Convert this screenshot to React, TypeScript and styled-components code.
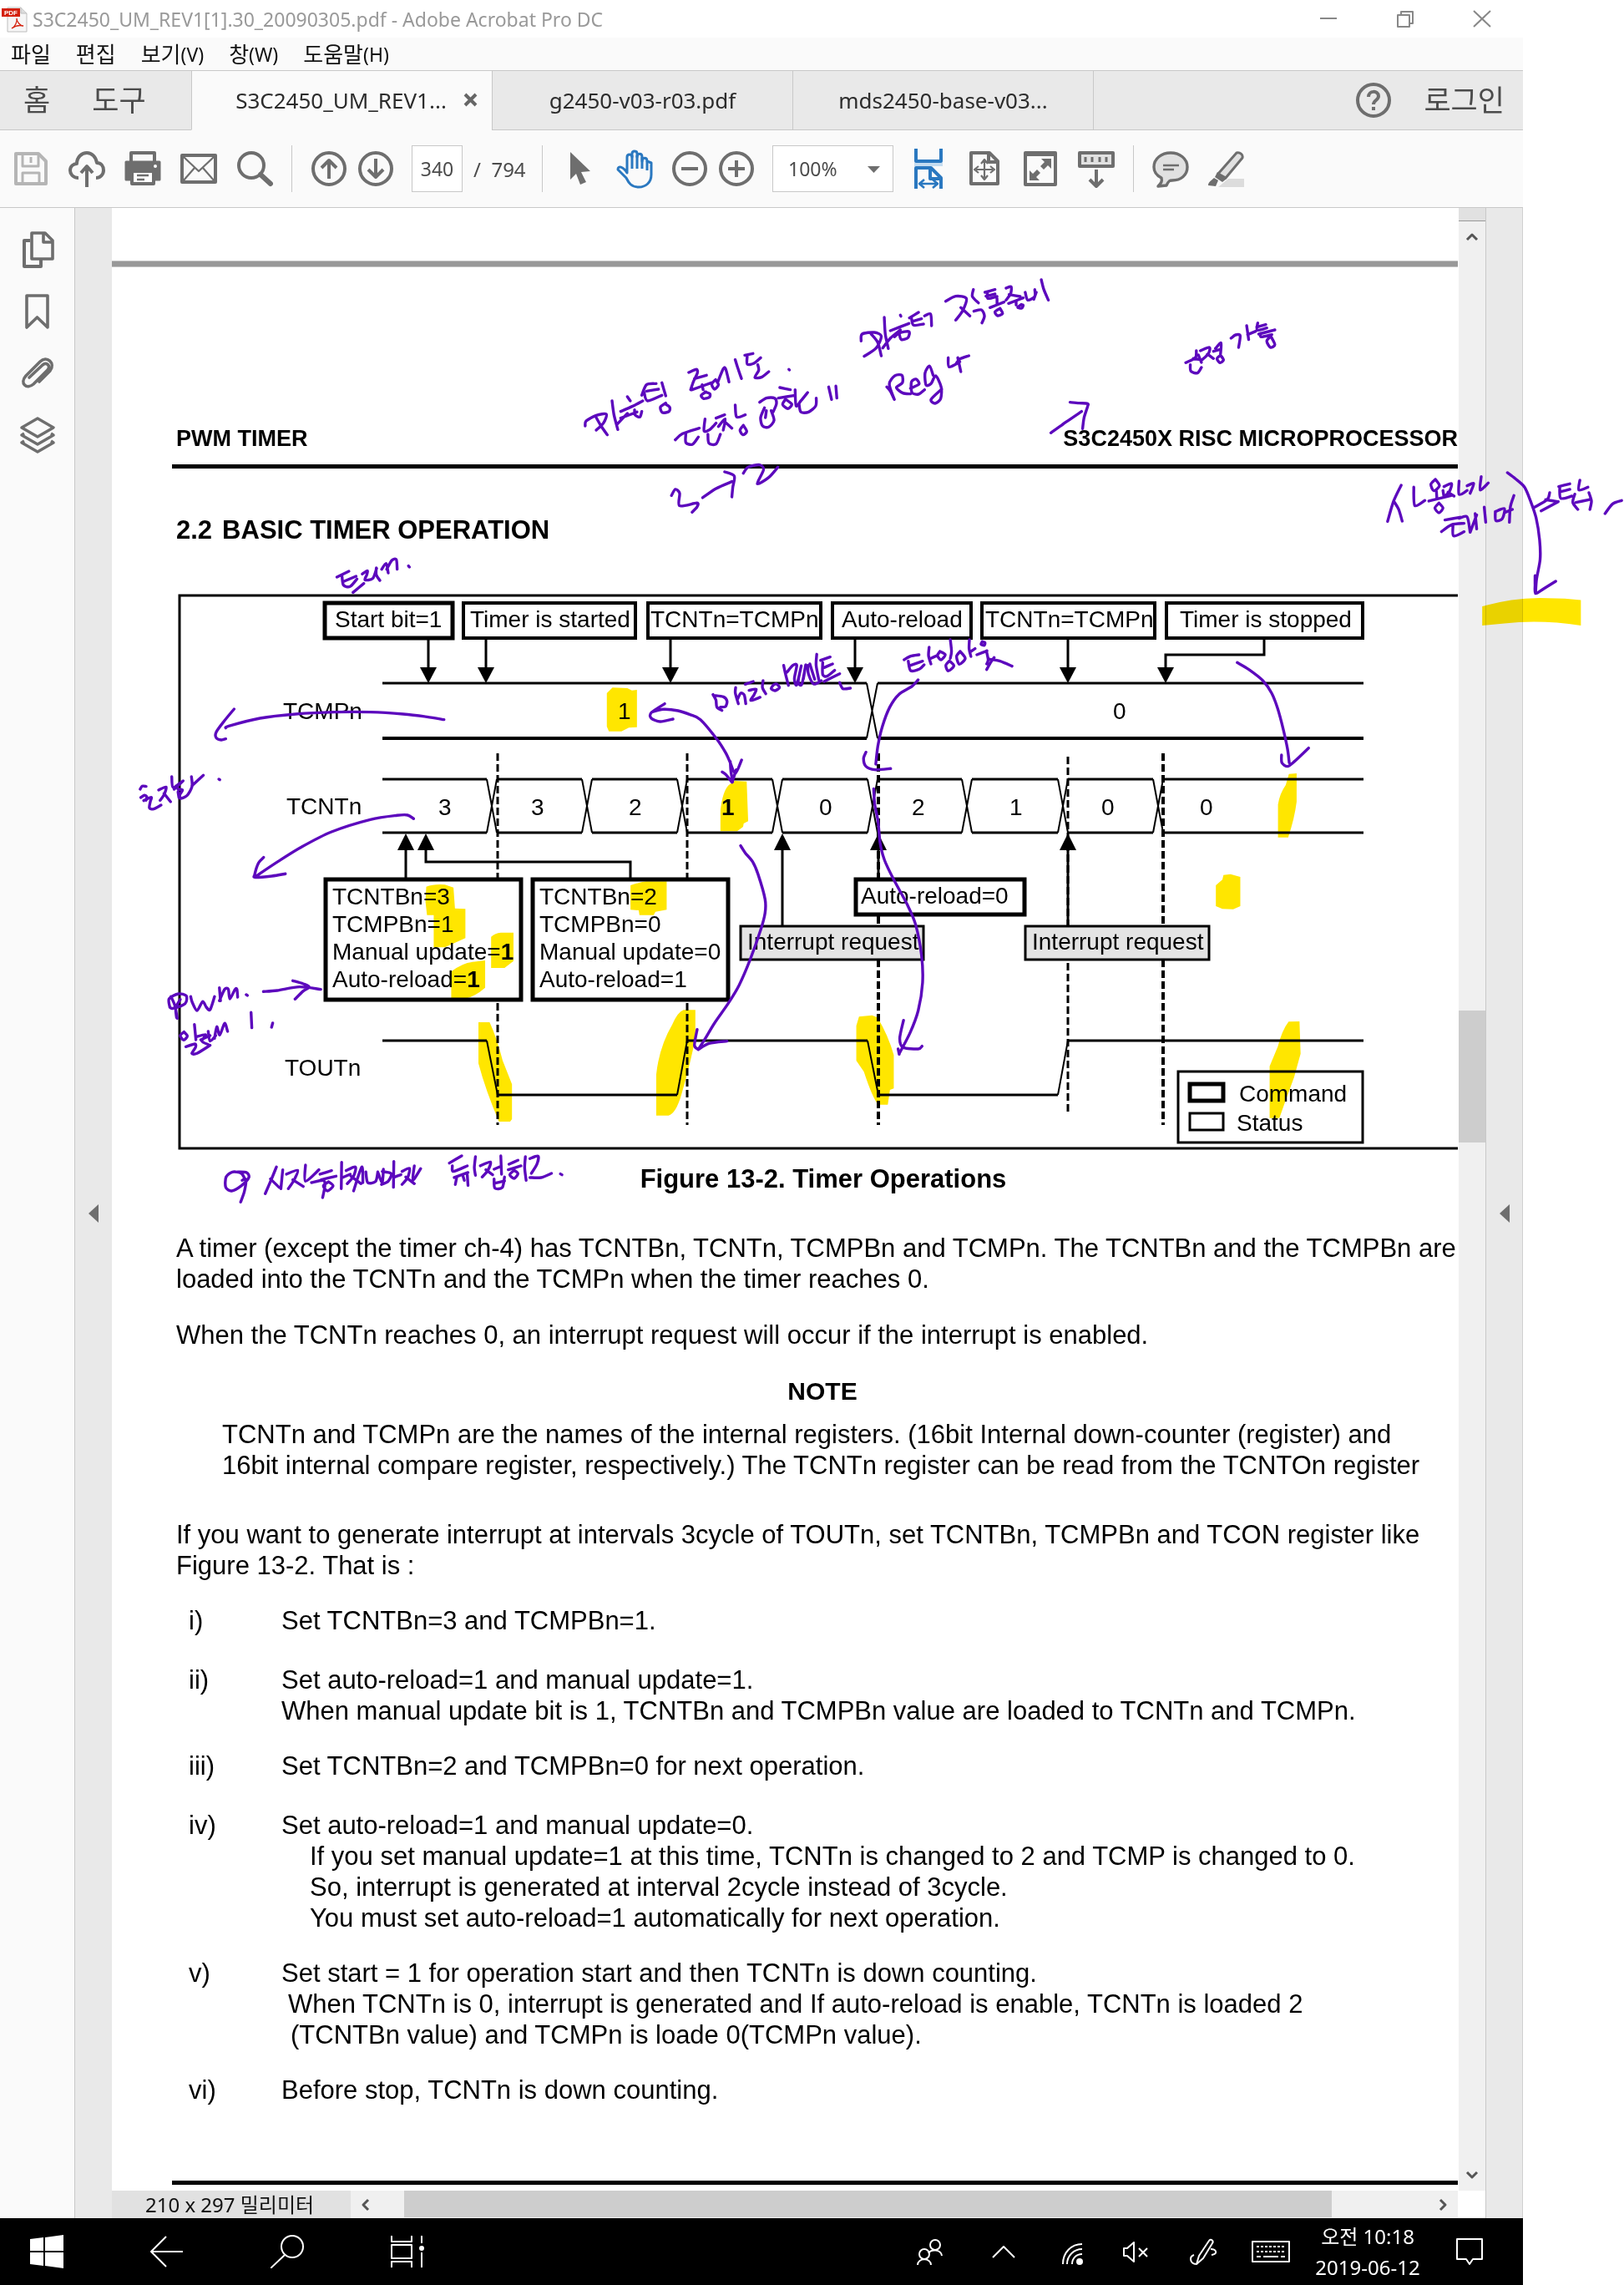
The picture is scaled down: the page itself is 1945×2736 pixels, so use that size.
import React from "react";
import styled, { createGlobalStyle } from "styled-components";

const GlobalStyle = createGlobalStyle`
  *, *::before, *::after { box-sizing: border-box; }
  html, body { margin: 0; padding: 0; background: #ffffff; }
  button, input, select { font: inherit; color: inherit; }
  p, h1, h2, h3, ol { margin: 0; padding: 0; }
`;

const UI_FONT = `"Noto Sans", "Noto Sans CJK KR", sans-serif`;
const DOC_FONT = `"Liberation Sans", Arial, sans-serif`;
const INK = "#5c08bd";
const GRAY = "#6e6e6e";
const BLUE = "#2a78c0";

/* ---------- shell ---------- */

const Screen = styled.div`
  position: relative;
  isolation: isolate;
  background: #ffffff;
  font-family: ${UI_FONT};
  overflow: hidden;
`;

const Desktop = styled.div`
  display: flex;
  flex-direction: column;
  margin-right: 121px;
`;

const PlainButton = styled.button`
  display: flex;
  align-items: center;
  justify-content: center;
  padding: 0;
  border: 0;
  background: transparent;
  flex: none;
`;

const TitleBar = styled.header`
  display: flex;
  align-items: center;
  height: 45px;
  padding: 0 3px 0 2px;
  background: #ffffff;
  color: #999999;
`;

const WindowTitle = styled.h1`
  flex: 1;
  padding-left: 6px;
  font-size: 23px;
  line-height: 30px;
  font-weight: 400;
  white-space: nowrap;
`;

const WindowButton = styled(PlainButton)`
  width: 92px;
  height: 45px;
`;

const MenuBar = styled.nav`
  display: flex;
  align-items: center;
  gap: 30px;
  height: 39px;
  padding-left: 13px;
  background: #fafafa;
  color: #111111;
`;

const MenuItem = styled(PlainButton)`
  font-size: 26px;
  line-height: 36px;
  white-space: nowrap;

  small {
    font-size: 23px;
  }
`;

const TabStrip = styled.div`
  display: flex;
  height: 72px;
  border-top: 1px solid #c8c8c8;
  background: #e9e9e9;
  color: #4b4b4b;
`;

const HomeTabs = styled.div`
  display: flex;
  align-items: center;
  gap: 50px;
  width: 229px;
  padding-left: 28px;
  border-bottom: 1px solid #c8c8c8;
`;

const BigTextButton = styled(PlainButton)`
  font-size: 35px;
  line-height: 44px;
  white-space: nowrap;
`;

const DocTab = styled.div<{ $active?: boolean }>`
  display: flex;
  align-items: center;
  justify-content: center;
  gap: 20px;
  width: 360px;
  border-left: 1px solid #c8c8c8;
  border-bottom: 1px solid ${(p) => (p.$active ? "#fafafa" : "#c8c8c8")};
  background: ${(p) => (p.$active ? "#fafafa" : "#e9e9e9")};
  color: #2c2c2c;
  padding-left: ${(p) => (p.$active ? "36px" : "0")};
`;

const TabName = styled(PlainButton)`
  font-size: 26px;
  line-height: 36px;
  white-space: nowrap;
`;

const TabRest = styled.div`
  display: flex;
  align-items: center;
  justify-content: flex-end;
  gap: 38px;
  flex: 1;
  padding-right: 22px;
  border-left: 1px solid #c8c8c8;
  border-bottom: 1px solid #c8c8c8;
`;

const Toolbar = styled.div`
  display: flex;
  align-items: center;
  height: 93px;
  padding: 0 15px;
  border-bottom: 1px solid #c8c8c8;
  background: #fafafa;
  color: ${GRAY};
`;

const ToolGroup = styled.div<{ $gap: number }>`
  display: flex;
  align-items: center;
  gap: ${(p) => p.$gap}px;
`;

const ToolButton = styled(PlainButton)`
  width: 44px;
  height: 48px;
`;

const Divider = styled.div`
  width: 1px;
  height: 56px;
  margin: 0 22px;
  background: #c8c8c8;
`;

const PageField = styled.label`
  display: flex;
  align-items: center;
  gap: 13px;
  width: 134px;
  margin-left: 21px;
  font-size: 24px;
  color: #4b4b4b;
  white-space: nowrap;

  input {
    width: 61px;
    height: 56px;
    padding: 0;
    border: 1px solid #c8c8c8;
    background: #ffffff;
    text-align: center;
    font-size: 23px;
  }
`;

const ZoomField = styled.label`
  position: relative;
  display: flex;
  margin: 0 20px 0 21px;

  select {
    appearance: none;
    width: 145px;
    height: 56px;
    padding: 0 0 0 18px;
    border: 1px solid #c8c8c8;
    border-radius: 0;
    background: #ffffff;
    color: #4b4b4b;
    font-size: 23px;
  }

  svg {
    position: absolute;
    right: 16px;
    top: 25px;
    pointer-events: none;
  }
`;

/* ---------- work area ---------- */

const WorkArea = styled.div`
  display: flex;
  background: #e9e9e9;
`;

const SideRail = styled.nav`
  display: flex;
  flex-direction: column;
  align-items: center;
  gap: 30px;
  width: 90px;
  padding-top: 28px;
  border-right: 1px solid #c8c8c8;
  background: #fafafa;
`;

const RailButton = styled(PlainButton)`
  width: 44px;
  height: 44px;
`;

const Gutter = styled.div<{ $lined?: boolean }>`
  display: flex;
  align-items: center;
  justify-content: center;
  width: 44px;
  background: #e9e9e9;
  border-right: ${(p) => (p.$lined ? "1px solid #d0d0d0" : "0")};
`;

const Viewer = styled.main`
  display: flex;
  flex-direction: column;
  flex: 1;
  min-width: 0;
  background: #ffffff;
`;

const ViewRow = styled.div`
  display: flex;
  border-right: 1px solid #c8c8c8;
`;

const PageView = styled.div`
  flex: 1;
  min-width: 0;
  overflow: hidden;
  padding-top: 63px;
`;

const PageBreak = styled.div`
  height: 8px;
  border: solid #c4c4c4;
  border-width: 1px 0;
  background: #989898;
`;

const Sheet = styled.article`
  padding: 189px 0 7px 72px;
  color: #000000;
  font-family: ${DOC_FONT};
  font-size: 31px;
  line-height: 37px;
  white-space: nowrap;
`;

const SheetHeader = styled.div`
  display: flex;
  justify-content: space-between;
  padding: 0 0 15px 5px;
  border-bottom: 5px solid #000000;
  font-size: 27px;
  line-height: 32px;
  font-weight: 700;
`;

const SectionTitle = styled.h2`
  display: flex;
  gap: 12px;
  padding: 55px 0 47px 5px;
  font-size: 31px;
  line-height: 37px;
  font-weight: 700;
`;

const FigureBox = styled.figure`
  margin: 0 0 0 -72px;

  svg {
    display: block;
  }

  figcaption {
    width: 1704px;
    padding-top: 8px;
    text-align: center;
    font-weight: 700;
  }
`;

const Para = styled.p<{ $top: number; $indent?: number }>`
  padding: ${(p) => p.$top}px 0 0 ${(p) => p.$indent ?? 5}px;
`;

const NoteTitle = styled.h3`
  width: 1558px;
  padding-top: 30px;
  text-align: center;
  font-size: 30px;
  line-height: 37px;
`;

const Steps = styled.ol`
  list-style: none;
  padding-left: 20px;
`;

const Step = styled.li<{ $loose?: boolean }>`
  display: grid;
  grid-template-columns: 111px 1fr;
  padding-top: ${(p) => (p.$loose ? 34 : 29)}px;
`;

const StepLine = styled.div<{ $indent?: number }>`
  padding-left: ${(p) => p.$indent ?? 0}px;
`;

const EndRule = styled.div`
  height: 5px;
  margin-top: 90px;
  background: #000000;
`;

const VScroll = styled.div`
  display: flex;
  flex-direction: column;
  align-items: center;
  width: 33px;
  background: #f0f0f0;
  border-left: 1px solid #ffffff;
`;

const SplitHandle = styled.div`
  align-self: stretch;
  height: 16px;
  border-bottom: 1px solid #989898;
  background: #e1e1e1;
`;

const ScrollButton = styled(PlainButton)`
  width: 32px;
  height: 38px;
`;

const Space = styled.div<{ $grow: number }>`
  flex: ${(p) => p.$grow} 1 0;
`;

const VThumb = styled.div`
  align-self: stretch;
  height: 158px;
  background: #cdcdcd;
`;

const StatusRow = styled.div`
  display: flex;
  height: 33px;
  border-right: 1px solid #c8c8c8;
  padding-right: 33px;
`;

const PaperSize = styled.div`
  width: 286px;
  padding-left: 40px;
  background: #e1e1e1;
  color: #111111;
  font-size: 24px;
  line-height: 33px;
  white-space: nowrap;
`;

const HScroll = styled.div`
  display: flex;
  align-items: stretch;
  flex: 1;
  background: #f0f0f0;
`;

const HButton = styled(PlainButton)`
  width: 36px;
  height: 33px;
`;

const HThumb = styled.div`
  flex: 1;
  height: 32px;
  margin: 0 115px 0 28px;
  background: #cdcdcd;
`;

/* ---------- taskbar ---------- */

const Taskbar = styled.footer`
  display: flex;
  align-items: center;
  justify-content: space-between;
  height: 80px;
  padding: 0 48px 0 36px;
  background: #000000;
  color: #ffffff;
`;

const TaskGroup = styled.div<{ $gap: number }>`
  display: flex;
  align-items: center;
  gap: ${(p) => p.$gap}px;
`;

const TaskButton = styled(PlainButton)<{ $w: number }>`
  width: ${(p) => p.$w}px;
  height: 48px;
`;

const Clock = styled.time`
  width: 132px;
  margin: 0 40px 0 26px;
  font-size: 24px;
  line-height: 37px;
  text-align: center;
  white-space: nowrap;
`;

/* ---------- icons ---------- */

type IconProps = { w?: number; h?: number; color?: string; sw?: number; children: React.ReactNode };

const Icon = ({ w = 44, h = 48, color = GRAY, sw = 4, children }: IconProps) => (
  <svg width={w} height={h} viewBox={`0 0 ${w} ${h}`} fill="none" stroke={color} strokeWidth={sw} strokeLinejoin="round" aria-hidden="true">
    {children}
  </svg>
);

const PdfIcon = () => (
  <svg width="31" height="32" viewBox="0 0 31 32" aria-hidden="true">
    <path d="M7 2h16l7 7v22H7z" fill="#f6f6f6" stroke="#bdbdbd" />
    <path d="M23 2v7h7" fill="#dddddd" stroke="#bdbdbd" />
    <rect x="0" y="3" width="22" height="10" fill="#d4200c" />
    <text x="11" y="11" fontSize="8" fontWeight="700" fill="#fff" textAnchor="middle" fontFamily="Liberation Sans">PDF</text>
    <path d="M12 27c4-2 7-8 6-12 0 4 4 9 8 9-4-1-10 0-14 3z" fill="none" stroke="#d4200c" strokeWidth="1.3" />
  </svg>
);

const SaveIcon = () => (
  <Icon color="#b5b5b5">
    <path d="M4 6h27l9 9v27H4z" />
    <path d="M12 7v14h19V7M22 10v7M12 42V29h20v13" strokeWidth="3" />
  </Icon>
);
const CloudIcon = () => (
  <Icon>
    <path d="M12 35C5 35 2 30 2 26c0-5 4-8 8-8 0-8 6-13 12-13s11 5 12 12c5 0 8 4 8 9s-4 9-9 9" />
    <path d="M22 46V23M15 29l7-8 7 8" />
  </Icon>
);
const PrintIcon = () => (
  <Icon>
    <path d="M8 16V5h28v11" />
    <path d="M2 16h40v21h-6v-7H8v7H2z" fill={GRAY} strokeWidth="3" />
    <path d="M9 27h26v15H9z" fill="#fff" />
    <path d="M15 32h14M15 37h9" strokeWidth="2.5" />
    <circle cx="37" cy="21" r="1" stroke="#fff" strokeWidth="2" />
  </Icon>
);
const MailIcon = () => (
  <Icon>
    <path d="M2 8h40v32H2z" />
    <path d="M3 9l19 18L41 9M3 39l14-16M41 39L27 23" strokeWidth="2.2" />
  </Icon>
);
const SearchIcon = () => (
  <Icon>
    <circle cx="18" cy="20" r="15" />
    <path d="M29 31l12 11" strokeWidth="6" strokeLinecap="round" />
  </Icon>
);
const RoundIcon = ({ d }: { d: string }) => (
  <Icon>
    <circle cx="22" cy="24" r="19" />
    <path d={d} strokeWidth="4" />
  </Icon>
);
const PointerIcon = () => (
  <Icon>
    <path d="M11 4v33l7-7 5 13 7-3-6-12 11-1z" fill={GRAY} stroke="none" />
  </Icon>
);
const HandIcon = () => (
  <Icon color={BLUE} sw={3}>
    <path d="M13 29V10c0-4 6-4 6 0v-4c0-4 6-4 6 0v4c0-5 6-5 6 0v5c0-5 6-5 6 0l5 2v14c0 10-7 15-15 15-9 0-12-5-15-11L2 25c0-5 6-4 11 4z" />
    <path d="M19 8v16M25 8v16M31 10v14M37 15v11" />
  </Icon>
);
const PageWidthIcon = () => (
  <Icon color={BLUE}>
    <path d="M7 0v15h30V0" />
    <path d="M5 19h34" stroke="#c4dcf0" />
    <path d="M7 48V23h18l12 12v13M24 23v13h13" />
    <path d="M12 42h20M17 37l-6 5 6 5M27 37l6 5-6 5" strokeWidth="2.6" />
  </Icon>
);
const FitPageIcon = () => (
  <Icon>
    <path d="M6 5h22l10 10v27H6zM27 5v11h11" />
    <path d="M22 15v20M12 25h20M18 18l4-5 4 5M18 32l4 5 4-5M15 21l-5 4 5 4M29 21l5 4-5 4" strokeWidth="2.2" />
  </Icon>
);
const FullScreenIcon = () => (
  <Icon>
    <path d="M4 5h36v38H4zM4 7h36" />
    <path d="M9 38V26l4 4 5-5 4 4-5 5 4 4zM35 12v12l-4-4-5 5-4-4 5-5-4-4z" fill={GRAY} stroke="none" />
  </Icon>
);
const ReadModeIcon = () => (
  <Icon>
    <path d="M2 5h40v16H2z" fill="#e1e1e1" />
    <path d="M9 10v6M17 10v6M26 10v6M34 10v6" strokeWidth="3" />
    <path d="M22 25v20M14 37l8 8 8-8" />
  </Icon>
);
const CommentIcon = () => (
  <Icon>
    <path d="M22 5c11 0 20 7 20 17s-8 16-18 16c-3 0-4 0-7 6l-10 1c4-4 5-6 4-10C5 32 2 28 2 22 2 12 11 5 22 5z" fill="#e1e1e1" strokeWidth="3.4" />
    <path d="M13 20h19M13 25h13" strokeWidth="2.4" />
  </Icon>
);
const MarkerIcon = () => (
  <Icon>
    <path d="M13 46l12-10h20v10z" fill="#dcdcdc" stroke="none" />
    <path d="M35 5c4-1 8 2 7 6L22 35l-9-5z" fill="#e1e1e1" strokeWidth="3" />
    <path d="M12 28l11 8-5 4-9-6zM8 35l5 3-3 7-9-1c0-4 3-5 7-9z" fill={GRAY} stroke="none" />
  </Icon>
);

const Chevron = ({ d }: { d: string }) => (
  <Icon w={16} h={16} color="#555555" sw={3}>
    <path d={d} />
  </Icon>
);

/* ---------- timing diagram ---------- */

const DiagramText = styled.text<{ $bold?: boolean }>`
  font-family: ${DOC_FONT};
  font-size: 28px;
  font-weight: ${(p) => (p.$bold ? 700 : 400)};
  fill: #000000;
`;

const eventBoxes = [
  { x: 389, w: 153, tx: 401, label: "Start bit=1", sw: 5 },
  { x: 555, w: 206, tx: 563, label: "Timer is started", sw: 4 },
  { x: 776, w: 207, tx: 779, label: "TCNTn=TCMPn", sw: 4 },
  { x: 997, w: 166, tx: 1008, label: "Auto-reload", sw: 4 },
  { x: 1176, w: 207, tx: 1180, label: "TCNTn=TCMPn", sw: 4 },
  { x: 1397, w: 235, tx: 1413, label: "Timer is stopped", sw: 4 },
];

const crossings = [583, 697, 811, 925, 1039, 1152, 1267, 1381];
const counts = [
  { x: 525, v: "3" },
  { x: 636, v: "3" },
  { x: 753, v: "2" },
  { x: 864, v: "1", bold: true },
  { x: 981, v: "0" },
  { x: 1092, v: "2" },
  { x: 1209, v: "1" },
  { x: 1319, v: "0" },
  { x: 1437, v: "0" },
];

const dashes = [
  { x: 596, y1: 902, y2: 1347, w: 3 },
  { x: 823, y1: 902, y2: 1347, w: 3 },
  { x: 1052, y1: 902, y2: 1347, w: 4 },
  { x: 1279, y1: 906, y2: 1332, w: 3 },
  { x: 1393, y1: 902, y2: 1347, w: 4 },
];

const downHead = (x: number) => `M${x - 10} 799h20l-10 19z`;
const upHead = (x: number) => `M${x - 10} 1018h20l-10 -20z`;

const bus = (y: number) => {
  let d = `M458 ${y}`;
  crossings.forEach((c) => {
    d += `H${c}M${c + 12} ${y}`;
  });
  return `${d}H1633`;
};

const Registers = ({ x, rows }: { x: number; rows: [string, string, boolean?][] }) => (
  <>
    {rows.map(([name, value, bold], i) => (
      <DiagramText key={name} x={x} y={1083 + i * 33}>
        {name}=<tspan fontWeight={bold ? 700 : 400}>{value}</tspan>
      </DiagramText>
    ))}
  </>
);

const TimingDiagram = () => (
  <svg width="1632" height="685" viewBox="134 700 1632 685" fill="none" stroke="#000" strokeWidth="3" role="img" aria-label="Timer Operations">
    <path d="M1766 713H215V1375H1766" />

    {dashes.map((l) => (
      <path key={l.x} d={`M${l.x} ${l.y1}V${l.y2}`} strokeWidth={l.w} strokeDasharray="9 4" />
    ))}

    <path d="M458 818H1038M1051 818H1633" />
    <path d="M458 884H1038M1051 884H1633" strokeWidth="4" />
    <path d="M1038 818L1051 884M1051 818L1038 884" strokeWidth="2" />
    <path d={bus(933)} />
    <path d={bus(997)} />
    {crossings.map((c) => (
      <path key={c} d={`M${c} 933L${c + 12} 997M${c + 12} 933L${c} 997`} strokeWidth="2" />
    ))}

    <path d="M458 1246H583M596 1311H811M823 1246H1039M1052 1311H1267M1279 1246H1633" />
    <path d="M583 1246L596 1311M811 1311L823 1246M1039 1246L1052 1311M1267 1311L1279 1246" strokeWidth="2" />

    <path d="M513 765V800M582 765V800M803 765V800M1024 765V800M1279 765V800M1514 765V784H1396V800" />
    <path d="M486 1052V1017M510 1017V1032H755V1052M937 1108V1017M1052 1052V1017M1279 1108V1017" />
    <g fill="#000" stroke="none">
      {[513, 582, 803, 1024, 1279, 1396].map((x) => (
        <path key={x} d={downHead(x)} />
      ))}
      {[486, 510, 937, 1052, 1279].map((x) => (
        <path key={x} d={upHead(x)} />
      ))}
    </g>

    <g fill="#fff">
      {eventBoxes.map((b) => (
        <rect key={b.x} x={b.x} y="722" width={b.w} height="42" strokeWidth={b.sw} />
      ))}
      <rect x="390" y="1053" width="234" height="144" strokeWidth="5" />
      <rect x="638" y="1053" width="234" height="144" strokeWidth="5" />
      <rect x="1025" y="1053" width="202" height="42" strokeWidth="5" />
      <rect x="1411" y="1283" width="221" height="85" />
      <rect x="1425" y="1298" width="40" height="20" strokeWidth="5" />
      <rect x="1425" y="1333" width="40" height="20" />
    </g>
    <g fill="#e4e4e4">
      <rect x="887" y="1109" width="219" height="40" />
      <rect x="1228" y="1109" width="220" height="40" />
    </g>

    <g stroke="none">
      {eventBoxes.map((b) => (
        <DiagramText key={b.x} x={b.tx} y="751">
          {b.label}
        </DiagramText>
      ))}
      <DiagramText x="339" y="861">TCMPn</DiagramText>
      <DiagramText x="343" y="975">TCNTn</DiagramText>
      <DiagramText x="341" y="1288">TOUTn</DiagramText>
      <DiagramText x="740" y="861">1</DiagramText>
      <DiagramText x="1333" y="861">0</DiagramText>
      {counts.map((c) => (
        <DiagramText key={c.x} x={c.x} y="976" $bold={c.bold}>
          {c.v}
        </DiagramText>
      ))}
      <Registers x={398} rows={[["TCNTBn", "3"], ["TCMPBn", "1"], ["Manual update", "1", true], ["Auto-reload", "1", true]]} />
      <Registers x={646} rows={[["TCNTBn", "2"], ["TCMPBn", "0"], ["Manual update", "0"], ["Auto-reload", "1"]]} />
      <DiagramText x="1031" y="1082">Auto-reload=0</DiagramText>
      <DiagramText x="895" y="1137">Interrupt request</DiagramText>
      <DiagramText x="1236" y="1137">Interrupt request</DiagramText>
      <DiagramText x="1484" y="1319">Command</DiagramText>
      <DiagramText x="1481" y="1354">Status</DiagramText>
    </g>
  </svg>
);

/* ---------- pen and highlighter layers ---------- */

const InkSvg = styled.svg<{ $marker?: boolean }>`
  position: absolute;
  left: 0;
  top: 0;
  pointer-events: none;
  mix-blend-mode: ${(p) => (p.$marker ? "multiply" : "normal")};
`;

/* Joins a list of pen samples with a smooth curve that passes through each of them. */
const stroke = (samples: string) => {
  const p = samples.split(" ").map((s) => s.split(",").map(Number));
  const at = (i: number) => p[Math.max(0, Math.min(p.length - 1, i))];
  let d = `M${p[0][0]} ${p[0][1]}`;
  for (let i = 0; i < p.length - 1; i++) {
    const [a, b, c, e] = [at(i - 1), at(i), at(i + 1), at(i + 2)];
    const k = 7;
    d += `C${b[0] + (c[0] - a[0]) / k} ${b[1] + (c[1] - a[1]) / k} ${c[0] - (e[0] - b[0]) / k} ${c[1] - (e[1] - b[1]) / k} ${c[0]} ${c[1]}`;
  }
  return d;
};

const penGroups: { at: string; strokes: string }[] = [
  {
    at: "translate(120 300) scale(.574 .3333)",
    strokes:
      "1012,630 1014,612 1035,592 1056,588 1050,620 1035,645|1035,600 1045,630 1058,662|1068,540 1072,590 1080,643|1078,625 1100,585|" +
      "1100,525 1106,540|1086,578 1110,560 1132,540|1086,602 1120,580|1115,572 1116,590 1126,598 1130,578|" +
      "1130,520 1140,482 1160,478|1140,505 1165,498|1135,510 1142,540 1172,520|1172,475 1180,522|1180,548 1169,562 1173,582 1187,578 1188,562 1178,550|" +
      "1228,438 1244,427 1246,440 1238,470 1232,500|1240,460 1265,448|1235,500 1275,475|1256,482 1258,500|1264,508 1254,520 1259,532 1271,527 1272,514 1262,508|" +
      "1284,464 1276,480 1282,498 1290,482 1284,464|1288,475 1300,425 1305,425 1312,472|1325,392 1330,420 1338,460|" +
      "1345,376 1362,370|1350,380 1350,408 1363,406 1378,385|1372,410 1374,430 1366,456 1380,455 1395,435|1437,427 1438,429|" +
      "1200,680 1215,658 1250,638|1222,658 1222,690 1236,696 1248,670|1262,605 1260,648 1272,643 1285,620|1268,660 1270,692 1285,695 1294,660|" +
      "1285,602 1303,590|1290,632 1304,605 1300,645|1303,615 1318,638|1325,555 1328,598 1346,590|1342,628 1335,645 1341,662 1349,650 1342,628|" +
      "1376,545 1390,530 1407,530 1411,550 1404,580|1386,565 1378,600 1382,630 1395,634 1406,610 1400,575|1390,575 1388,600|" +
      "1418,492 1440,500|1415,530 1450,520|1430,534 1424,553 1435,568 1443,552 1430,534|1450,500 1452,558 1462,540 1476,510|1458,550 1462,580 1478,580 1493,558 1494,530|" +
      "1520,490 1526,535|1535,487 1537,530|" +
      "1192,880 1200,858 1209,872 1209,917 1245,907 1245,922 1235,940|1257,888 1285,855 1318,830|1303,795 1323,810 1320,850 1318,885|1342,800 1352,778 1376,770 1384,788 1371,838 1395,815 1414,778",
  },
  {
    at: "translate(1000 300) scale(.6028 .3333)",
    strokes:
      "52,325 54,300 78,294 92,308 82,350 58,380|72,300 85,330 92,378|98,240 100,300 106,352|95,350 110,315 130,285|130,232 131,236|110,288 147,262|118,310 128,296 147,291 145,313 132,320 128,302|" +
      "148,242 166,222|152,242 156,268 176,264|155,254 172,245|178,235 190,228 192,270|" +
      "220,182 240,164 261,172 254,215 240,250|250,205 268,235|275,140 273,165 285,188|276,218 291,213 297,235 292,260|" +
      "298,150 318,140|303,152 304,172 322,165|300,164 318,156|308,205 336,185|322,172 322,195|328,208 318,220 323,234 333,226 328,208|" +
      "340,135 350,130 349,155 340,178|346,158 368,165|345,190 374,170|360,180 360,196|370,194 363,204 371,207 374,196 370,194|" +
      "378,150 383,178 397,165 397,140|395,175 400,150|410,105 415,140 424,178|" +
      "103,490 110,505 118,535|118,535 108,480 119,450 133,448 134,475 122,492 135,512 150,515|150,495 167,480 161,462 152,472 153,510 166,516 178,500|195,448 188,415 179,440 181,483 191,478 200,450 211,490 210,532 199,549 191,535 212,498|" +
      "225,385 227,418 248,400|240,408 248,390 266,378|244,385 250,435|" +
      "718,360 716,385 697,403|712,388 726,392|722,375 728,402|706,410 707,433 720,440 728,420|" +
      "726,360 744,348 742,370 730,392|740,372 752,388|756,352 767,332 766,372|752,362 764,356|766,376 759,388 765,403 772,393 766,376|" +
      "787,315 796,303 805,306 802,348|818,270 822,320|820,302 836,290|840,260 839,286 858,278|838,275 856,266|842,300 874,285|845,298 847,310 868,302|866,308 858,325 865,348 874,338 866,308|" +
      "429,655 460,615 490,578|467,545 485,548 502,550 502,560 495,600 492,640|" +
      "1125,843 1110,900 1098,973|1112,905 1120,930 1127,972|1150,850 1152,916 1172,898|1193,822 1184,840 1190,863 1201,845 1193,822|1180,900 1224,880|1195,865 1196,892|1208,862 1210,885|1200,907 1192,925 1200,942 1208,925 1200,907|" +
      "1210,848 1225,837 1221,865 1210,885|1218,868 1230,882|1240,828 1240,876 1256,862|1256,845 1269,837 1262,872|1284,812 1282,860 1298,835|" +
      "1212,968 1242,958|1205,1010 1225,985 1250,980|1228,985 1229,1025 1250,1010|1240,962 1256,957 1262,1012|1262,1012 1275,950|1272,945 1275,1000|1290,922 1293,976|1312,938 1313,970 1326,963 1330,927 1312,938|1332,940 1346,930|1349,880 1342,920 1340,976|" +
      "1420,870 1415,895 1390,922|1412,895 1436,902|1403,935 1437,902|1438,848 1460,838|1442,866 1460,858|1440,850 1442,890 1464,882|1480,825 1478,860 1496,850|1470,875 1466,905 1476,930|1472,905 1498,895|1498,870 1503,900 1500,930|1530,945 1545,910 1563,898|" +
      "1336,798 1352,820 1370,850 1382,900 1393,960 1400,1040 1401,1110 1394,1180 1392,1232|1391,1168 1391,1200 1392,1232 1408,1215 1432,1188",
  },
  {
    at: "translate(140 640) scale(.3571 .3333)",
    strokes:
      "738,153 778,132|755,150 760,182 782,187 805,160|762,168 802,150|792,208 828,176|823,142 840,130 838,145 832,163 858,158 871,122|870,120 870,145 882,165|888,125 903,104 910,138|905,125 922,93 937,90 940,125|978,113 981,117|" +
      "1097,665 1040,655 960,645 850,638 730,638 600,645 480,660 375,688 365,695|393,627 360,670 333,710 333,730 350,738 365,734|" +
      "995,1021 975,1008 940,1009 850,1024 720,1068 620,1122 540,1175 470,1225|492,1160 475,1180 462,1222 464,1232 520,1227 565,1219|" +
      "78,915 85,904 98,905|80,945 92,937 100,942 98,955|90,956 115,944 112,960 109,982 123,986 148,972|140,918 165,907 158,935 145,955|158,930 180,960|184,870 188,908 215,890|192,915 222,885|205,915 220,918 211,935 213,948 235,938 252,905 250,870|205,925 208,945|252,902 290,865|342,879 345,881",
  },
  {
    at: "translate(680 680) scale(.3571 .3333)",
    strokes:
      "353,543 310,552 280,540 280,520 325,488|282,518 320,508 370,513 410,527 445,545 500,615 530,665 545,700|518,733 530,742 551,770|545,695 547,730 553,768|545,700 562,738 583,690|551,770 565,725|" +
      "487,455 497,475 500,500 517,512|490,458 522,463 534,478 529,498 512,500|563,430 562,450 572,488|570,470 580,450 592,457 597,488|595,418 622,408|608,440 632,436 625,455 614,476 645,465|655,405 653,430 664,452|690,420 682,433 695,441 710,430 700,417 690,420|" +
      "724,350 730,380 740,422|735,375 755,350 768,350 760,398 768,420 783,352 773,408 785,418 798,348 790,400|805,350 807,380 825,417 850,405|812,345 828,400|835,310 833,350 842,402|848,332 880,320|855,340 855,383 870,389 895,368|860,358 888,345|860,408 912,380|912,412 923,434 948,432|" +
      "1128,330 1150,317 1178,312|1142,335 1150,369 1180,363 1195,348|1150,350 1190,335|1212,285 1210,315 1218,345|1218,325 1238,315|1248,300 1240,315 1252,330 1266,312 1248,300|1283,258 1287,300 1283,325|1280,334 1268,350 1276,370 1295,352 1280,334|1316,300 1304,318 1313,346 1333,325 1316,300|1347,258 1346,290 1352,318|1352,300 1366,290|1390,265 1386,274 1397,278 1399,268 1390,265|1372,312 1406,298|1404,298 1410,330 1405,345|1430,322 1418,340 1405,365|1415,328 1450,335 1490,353|" +
      "1175,402 1155,425 1110,455 1080,500 1055,570 1040,640 1033,705|1000,662 992,685 1000,713 1030,725 1083,721",
  },
  {
    at: "translate(820 980) scale(.6505 .3333)",
    strokes:
      "103,98 112,125 125,155 135,200 148,290 148,340 140,400 120,510 100,600 80,665 55,735 38,790 25,830|23,758 18,815 25,830|25,830 45,808 78,800|" +
      "348,-107 350,-50 356,10 360,90 368,150 385,220 410,310 425,380 436,490 438,590 430,690 415,770 395,845|403,725 396,790 402,822 430,828 437,818|393,828 395,847",
  },
  {
    at: "translate(1180 680) scale(.4209 .3333)",
    strokes: "717,340 750,365 790,405 815,450 832,505 848,580 860,650 865,700|843,672 844,700 860,713 880,695 920,647",
  },
  {
    at: "translate(140 980) scale(.4464 .3333)",
    strokes:
      "145,640 155,670 162,718|160,715 158,680 170,650|142,678 140,648 165,630 186,637 183,665 150,682 142,678|198,640 202,660 215,690 230,658 240,678 250,687 262,640|275,608 278,655|275,655 289,614 299,614 303,648 317,614 322,614 324,642|347,633 350,636|" +
      "393,622 430,618 490,605 547,614|472,583 500,594 516,605 500,620 478,649|" +
      "180,767 170,780 179,796 189,782 180,767|208,740 212,795|185,820 209,810 211,822 201,844 215,844 250,815|212,785 238,777 228,800 245,812|225,795 250,780|245,765 250,800 265,780|262,790 268,748 276,778 289,736 297,765|360,697 362,752|418,735 415,750|" +
      "345,1300 334,1275 310,1270 293,1288 292,1325 308,1338 335,1318 354,1290 348,1272 325,1270|336,1300 346,1297 342,1340 332,1378|" +
      "428,1252 415,1295 398,1348|412,1295 435,1325|445,1262 440,1330|455,1278 485,1264 475,1300 460,1330|472,1298 500,1322|506,1245 506,1303 542,1262|522,1308 554,1300 558,1320 552,1362|545,1278 576,1265|548,1298 588,1285|568,1305 554,1320 565,1338 580,1320 568,1305|603,1235 602,1330|605,1290 626,1278|" +
      "615,1265 640,1252 635,1285 618,1312|628,1285 655,1312|635,1338 657,1252 660,1308|668,1270 673,1308 694,1304 700,1270|700,1270 712,1308 715,1260|712,1268 736,1276 728,1303 710,1315|743,1232 742,1325|745,1288 762,1280|765,1268 785,1257 780,1290 765,1315|775,1288 798,1312|798,1248 794,1300 815,1258|" +
      "892,1238 925,1212|900,1248 903,1268 940,1248|905,1290 942,1272|912,1288 908,1315|928,1282 932,1300|940,1280 942,1318|962,1215 959,1255 962,1282|975,1248 1002,1234 995,1265 980,1288|990,1262 1008,1280|1012,1260 1030,1250|1030,1212 1032,1278|1012,1295 1014,1328 1034,1326 1040,1288|1015,1310 1040,1302|1052,1242 1076,1228|1050,1262 1084,1248|1066,1264 1054,1280 1066,1293 1076,1276 1066,1264|1096,1215 1094,1255 1098,1300|1108,1222 1130,1213 1127,1242 1112,1275|1108,1290 1138,1290 1166,1275|1190,1277 1194,1280",
  },
];

const markerGroups: { at: string; d: string }[] = [
  {
    at: "translate(140 980) scale(.4464 .3333)",
    d:
      "M830 245Q850 235 880 238L903 248L907 323L935 325L935 430L880 463L850 463V347L832 347L828 300Z" +
      "M1004 425Q1015 412 1030 410L1064 410L1064 512L1040 537L1004 537Z" +
      "M897 550Q925 520 955 515L988 510L988 608Q960 640 935 647L897 647Z" +
      "M1378 240Q1400 230 1420 226L1475 226L1475 328L1445 335L1440 347L1402 347L1400 330L1378 328Z" +
      "M970 732L1000 732Q1020 790 1035 870L1060 955L1060 1080L1055 1089L1025 1089Q990 980 970 880Z" +
      "M1447 1067L1447 920Q1455 820 1490 740Q1505 695 1520 688L1552 688L1552 790Q1535 900 1515 990Q1500 1060 1480 1067Z",
  },
  {
    at: "translate(820 980) scale(.6505 .3333)",
    d:
      "M316 745L321 712L345 707L355 715Q375 780 385 850L385 970L378 975L374 1028L356 1028Q345 1000 330 910L316 870Z" +
      "M978 240L990 220L992 203L1005 200L1023 210L1023 315L1010 326L990 325L978 315Z" +
      "M1077 1076V890L1092 820Q1100 760 1112 730L1132 729L1134 845L1122 930Q1105 1020 1095 1076Z",
  },
  {
    at: "translate(680 680) scale(.3571 .3333)",
    d:
      "M131 450L150 430L200 432L215 440L232 438L232 572L205 574L180 587L138 587L131 570Z" +
      "M512 870Q520 800 540 780L560 765L600 767L605 910L590 918L588 930L568 946L512 946Z",
  },
  { at: "translate(1180 680) scale(.4209 .3333)", d: "M833 968V850Q838 810 855 780L864 740L886 738L886 840Q880 900 862 968Z" },
  { at: "translate(1000 300) scale(.6028 .3333)", d: "M1286 1278Q1340 1250 1400 1248L1450 1250L1482 1256L1482 1347Q1400 1325 1330 1340L1286 1347Z" },
];

const Annotations = () => (
  <>
    <InkSvg $marker width="1945" height="1500" viewBox="0 0 1945 1500" fill="#ffe600" aria-hidden="true">
      {markerGroups.map((g, i) => (
        <path key={i} transform={g.at} d={g.d} />
      ))}
    </InkSvg>
    <InkSvg width="1945" height="1500" viewBox="0 0 1945 1500" fill="none" stroke={INK} strokeWidth="3.4" strokeLinecap="round" strokeLinejoin="round" aria-hidden="true">
      {penGroups.map((g, i) => (
        <path key={i} transform={g.at} vectorEffect="non-scaling-stroke" d={g.strokes.split("|").map(stroke).join("")} />
      ))}
    </InkSvg>
  </>
);

/* ---------- page ---------- */

const menus = [
  ["파일", ""],
  ["편집", ""],
  ["보기", "(V)"],
  ["창", "(W)"],
  ["도움말", "(H)"],
];

const DocumentPage = () => (
  <Sheet>
    <SheetHeader>
      <span>PWM TIMER</span>
      <span>S3C2450X RISC MICROPROCESSOR</span>
    </SheetHeader>
    <SectionTitle>
      <span>2.2</span>
      <span>BASIC TIMER OPERATION</span>
    </SectionTitle>
    <FigureBox>
      <TimingDiagram />
      <figcaption>Figure 13-2. Timer Operations</figcaption>
    </FigureBox>
    <Para $top={46}>
      A timer (except the timer ch-4) has TCNTBn, TCNTn, TCMPBn and TCMPn. The TCNTBn and the TCMPBn are
      <br />
      loaded into the TCNTn and the TCMPn when the timer reaches 0.
    </Para>
    <Para $top={30}>When the TCNTn reaches 0, an interrupt request will occur if the interrupt is enabled.</Para>
    <NoteTitle>NOTE</NoteTitle>
    <Para $top={15} $indent={60}>
      TCNTn and TCMPn are the names of the internal registers. (16bit Internal down-counter (register) and
      <br />
      16bit internal compare register, respectively.) The TCNTn register can be read from the TCNTOn register
    </Para>
    <Para $top={46}>
      If you want to generate interrupt at intervals 3cycle of TOUTn, set TCNTBn, TCMPBn and TCON register like
      <br />
      Figure 13-2. That is :
    </Para>
    <Steps>
      <Step>
        <span>i)</span>
        <StepLine>Set TCNTBn=3 and TCMPBn=1.</StepLine>
      </Step>
      <Step $loose>
        <span>ii)</span>
        <div>
          <StepLine>Set auto-reload=1 and manual update=1.</StepLine>
          <StepLine>When manual update bit is 1, TCNTBn and TCMPBn value are loaded to TCNTn and TCMPn.</StepLine>
        </div>
      </Step>
      <Step>
        <span>iii)</span>
        <StepLine>Set TCNTBn=2 and TCMPBn=0 for next operation.</StepLine>
      </Step>
      <Step $loose>
        <span>iv)</span>
        <div>
          <StepLine>Set auto-reload=1 and manual update=0.</StepLine>
          <StepLine $indent={34}>If you set manual update=1 at this time, TCNTn is changed to 2 and TCMP is changed to 0.</StepLine>
          <StepLine $indent={34}>So, interrupt is generated at interval 2cycle instead of 3cycle.</StepLine>
          <StepLine $indent={34}>You must set auto-reload=1 automatically for next operation.</StepLine>
        </div>
      </Step>
      <Step>
        <span>v)</span>
        <div>
          <StepLine>Set start = 1 for operation start and then TCNTn is down counting.</StepLine>
          <StepLine $indent={8}>When TCNTn is 0, interrupt is generated and If auto-reload is enable, TCNTn is loaded 2</StepLine>
          <StepLine $indent={11}>(TCNTBn value) and TCMPn is loade 0(TCMPn value).</StepLine>
        </div>
      </Step>
      <Step>
        <span>vi)</span>
        <StepLine>Before stop, TCNTn is down counting.</StepLine>
      </Step>
    </Steps>
    <EndRule />
  </Sheet>
);

export default function App() {
  return (
    <Screen>
      <GlobalStyle />
      <Desktop>
        <TitleBar>
          <PdfIcon />
          <WindowTitle>S3C2450_UM_REV1[1].30_20090305.pdf - Adobe Acrobat Pro DC</WindowTitle>
          <WindowButton aria-label="최소화">
            <Icon w={22} h={22} color="#888888" sw={2}><path d="M1 10h20" /></Icon>
          </WindowButton>
          <WindowButton aria-label="이전 크기로 복원">
            <Icon w={22} h={22} color="#888888" sw={2}><path d="M2 6h14v14H2zM6 6V2h14v14h-4" /></Icon>
          </WindowButton>
          <WindowButton aria-label="닫기">
            <Icon w={22} h={22} color="#888888" sw={2}><path d="M1 1l20 19M21 1L1 20" /></Icon>
          </WindowButton>
        </TitleBar>

        <MenuBar>
          {menus.map(([name, key]) => (
            <MenuItem key={name}>
              {name}
              {key && <small>{key}</small>}
            </MenuItem>
          ))}
        </MenuBar>

        <TabStrip>
          <HomeTabs>
            <BigTextButton>홈</BigTextButton>
            <BigTextButton>도구</BigTextButton>
          </HomeTabs>
          <DocTab $active>
            <TabName>S3C2450_UM_REV1...</TabName>
            <PlainButton aria-label="탭 닫기">
              <Icon w={18} h={18} color="#666666"><path d="M2 2l13 13M15 2L2 15" /></Icon>
            </PlainButton>
          </DocTab>
          <DocTab>
            <TabName>g2450-v03-r03.pdf</TabName>
          </DocTab>
          <DocTab>
            <TabName>mds2450-base-v03...</TabName>
          </DocTab>
          <TabRest>
            <ToolButton aria-label="도움말">
              <Icon>
                <circle cx="22" cy="24" r="19" />
                <path d="M16 20c0-8 12-8 12-1 0 5-6 5-6 10" />
                <path d="M22 32v4" />
              </Icon>
            </ToolButton>
            <BigTextButton>로그인</BigTextButton>
          </TabRest>
        </TabStrip>

        <Toolbar>
          <ToolGroup $gap={23}>
            <ToolButton aria-label="저장"><SaveIcon /></ToolButton>
            <ToolButton aria-label="업로드"><CloudIcon /></ToolButton>
            <ToolButton aria-label="인쇄"><PrintIcon /></ToolButton>
            <ToolButton aria-label="메일"><MailIcon /></ToolButton>
            <ToolButton aria-label="찾기"><SearchIcon /></ToolButton>
          </ToolGroup>
          <Divider />
          <ToolGroup $gap={12}>
            <ToolButton aria-label="이전 페이지"><RoundIcon d="M22 36V14M13 23l9-9 9 9" /></ToolButton>
            <ToolButton aria-label="다음 페이지"><RoundIcon d="M22 12v22M13 25l9 9 9-9" /></ToolButton>
          </ToolGroup>
          <PageField>
            <input aria-label="페이지" defaultValue="340" />
            <span>/&nbsp; 794</span>
          </PageField>
          <Divider />
          <ToolGroup $gap={22}>
            <ToolButton aria-label="선택"><PointerIcon /></ToolButton>
            <ToolButton aria-label="손 도구"><HandIcon /></ToolButton>
            <ToolButton aria-label="축소"><RoundIcon d="M12 24h20" /></ToolButton>
          </ToolGroup>
          <ToolGroup $gap={12}>
            <span />
            <ToolButton aria-label="확대"><RoundIcon d="M12 24h20M22 14v20" /></ToolButton>
          </ToolGroup>
          <ZoomField>
            <select aria-label="배율" defaultValue="100%">
              <option>100%</option>
            </select>
            <svg width="15" height="8" viewBox="0 0 15 8" aria-hidden="true"><path d="M0 0h15L7.500 8z" fill={GRAY} /></svg>
          </ZoomField>
          <ToolGroup $gap={23}>
            <ToolButton aria-label="폭에 맞추기"><PageWidthIcon /></ToolButton>
            <ToolButton aria-label="한 페이지 맞추기"><FitPageIcon /></ToolButton>
            <ToolButton aria-label="전체 화면"><FullScreenIcon /></ToolButton>
            <ToolButton aria-label="읽기 모드"><ReadModeIcon /></ToolButton>
          </ToolGroup>
          <Divider />
          <ToolGroup $gap={22}>
            <ToolButton aria-label="메모"><CommentIcon /></ToolButton>
            <ToolButton aria-label="강조"><MarkerIcon /></ToolButton>
          </ToolGroup>
        </Toolbar>

        <WorkArea>
          <SideRail>
            <RailButton aria-label="페이지 축소판">
              <Icon h={44}>
                <path d="M13 11H6v31h20v-9" />
                <path d="M15 2h16l9 9v22H15zM29 2v11h11" strokeWidth="3.6" />
              </Icon>
            </RailButton>
            <RailButton aria-label="책갈피">
              <Icon h={44}><path d="M9 3h25v38L21.500 29 9 41z" strokeWidth="3.6" /></Icon>
            </RailButton>
            <RailButton aria-label="첨부 파일">
              <Icon h={44} sw={3.6}>
                <path d="M12 27l16-15c5-4 10 1 6 6L17 35c-8 7-17-1-9-10L25 8c8-8 19 2 12 11L24 32" strokeLinecap="round" />
              </Icon>
            </RailButton>
            <RailButton aria-label="레이어">
              <Icon h={44} sw={3.4}>
                <path d="M22 2l19 11-19 11L3 13zM6 20l-3 2 19 11 19-11-3-2M6 29l-3 2 19 11 19-11-3-2" />
              </Icon>
            </RailButton>
          </SideRail>
          <Gutter>
            <PlainButton aria-label="탐색 창 열기">
              <svg width="12" height="22" viewBox="0 0 12 22" aria-hidden="true"><path d="M12 0v22L0 11z" fill={GRAY} /></svg>
            </PlainButton>
          </Gutter>

          <Viewer>
            <ViewRow>
              <PageView>
                <PageBreak />
                <DocumentPage />
              </PageView>
              <VScroll>
                <SplitHandle />
                <ScrollButton aria-label="위로"><Chevron d="M2 11l6-6 6 6" /></ScrollButton>
                <Space $grow={907} />
                <VThumb />
                <Space $grow={1216} />
                <ScrollButton aria-label="아래로"><Chevron d="M2 5l6 6 6-6" /></ScrollButton>
              </VScroll>
            </ViewRow>
            <StatusRow>
              <PaperSize>210 x 297 밀리미터</PaperSize>
              <HScroll>
                <HButton aria-label="왼쪽"><Chevron d="M11 2L5 8l6 6" /></HButton>
                <HThumb />
                <HButton aria-label="오른쪽"><Chevron d="M5 2l6 6-6 6" /></HButton>
              </HScroll>
            </StatusRow>
          </Viewer>

          <Gutter $lined>
            <PlainButton aria-label="도구 창 열기">
              <svg width="12" height="22" viewBox="0 0 12 22" aria-hidden="true"><path d="M12 0v22L0 11z" fill={GRAY} /></svg>
            </PlainButton>
          </Gutter>
        </WorkArea>

        <Taskbar>
          <TaskGroup $gap={104}>
            <TaskButton $w={40} aria-label="시작">
              <svg width="40" height="40" viewBox="0 0 40 40" fill="#fff" aria-hidden="true">
                <path d="M0 5l16-2v16H0zM18 3l22-3v19H18zM0 21h16v16L0 35zM18 21h22v19l-22-3z" />
              </svg>
            </TaskButton>
            <TaskButton $w={40} aria-label="뒤로">
              <Icon w={40} h={40} color="#fff" sw={2}><path d="M39 20H1M19 2L1 20l18 18" /></Icon>
            </TaskButton>
            <TaskButton $w={40} aria-label="검색">
              <Icon w={40} h={40} color="#fff" sw={2}><circle cx="26" cy="14" r="13" /><path d="M17 24L0 40" /></Icon>
            </TaskButton>
            <TaskButton $w={40} aria-label="작업 보기">
              <Icon w={40} h={40} color="#fff" sw={2}>
                <path d="M1 1v7h24V1M1 12h24v16H1zM1 39v-7h24v7M37 1v9M37 21v18" />
                <circle cx="37" cy="16" r="2" fill="#fff" />
              </Icon>
            </TaskButton>
          </TaskGroup>
          <TaskGroup $gap={0}>
            <TaskGroup $gap={33}>
              <TaskButton $w={48} aria-label="피플">
                <Icon w={48} h={32} color="#fff" sw={2}>
                  <circle cx="27" cy="8" r="6" /><circle cx="14" cy="19" r="6" />
                  <path d="M19 18c3-5 15-5 16 3M6 32c0-9 16-9 16 0" />
                </Icon>
              </TaskButton>
              <TaskButton $w={48} aria-label="숨겨진 아이콘">
                <Icon w={48} h={32} color="#fff" sw={2}><path d="M15 23l13-13 13 13" /></Icon>
              </TaskButton>
              <TaskButton $w={48} aria-label="네트워크">
                <Icon w={48} h={32} color="#fff" sw={2}>
                  <path d="M18 31C18 17 28 7 41 7M23 31c0-10 8-18 18-18M29 31c0-7 5-12 12-12" />
                  <circle cx="38" cy="28" r="3" fill="#fff" />
                </Icon>
              </TaskButton>
              <TaskButton $w={48} aria-label="음소거">
                <Icon w={48} h={32} color="#fff" sw={2}>
                  <path d="M10 12h4l8-7v23l-8-7h-4zM28 12l10 10M38 12L28 22" />
                </Icon>
              </TaskButton>
              <TaskButton $w={48} aria-label="펜">
                <Icon w={48} h={32} color="#fff" sw={2}>
                  <path d="M16 31l3-10L31 3c2-3 6 0 4 3L24 24zM13 20c-6 2-5 10 2 11M33 13c7 0 9 6 1 7" />
                </Icon>
              </TaskButton>
              <TaskButton $w={48} aria-label="터치 키보드">
                <Icon w={48} h={32} color="#fff" sw={2}>
                  <path d="M2 4h44v24H2z" />
                  <path d="M7 10h34M7 16h34" strokeDasharray="3 2" />
                  <path d="M7 22h5M15 22h18M36 22h5" />
                </Icon>
              </TaskButton>
            </TaskGroup>
            <Clock>
              오전 10:18
              <br />
              2019-06-12
            </Clock>
            <TaskButton $w={32} aria-label="알림 센터">
              <Icon w={32} h={34} color="#fff" sw={2}><path d="M1 2h30v24H20l-4 6-4-6H1z" /></Icon>
            </TaskButton>
          </TaskGroup>
        </Taskbar>
      </Desktop>
      <Annotations />
    </Screen>
  );
}
